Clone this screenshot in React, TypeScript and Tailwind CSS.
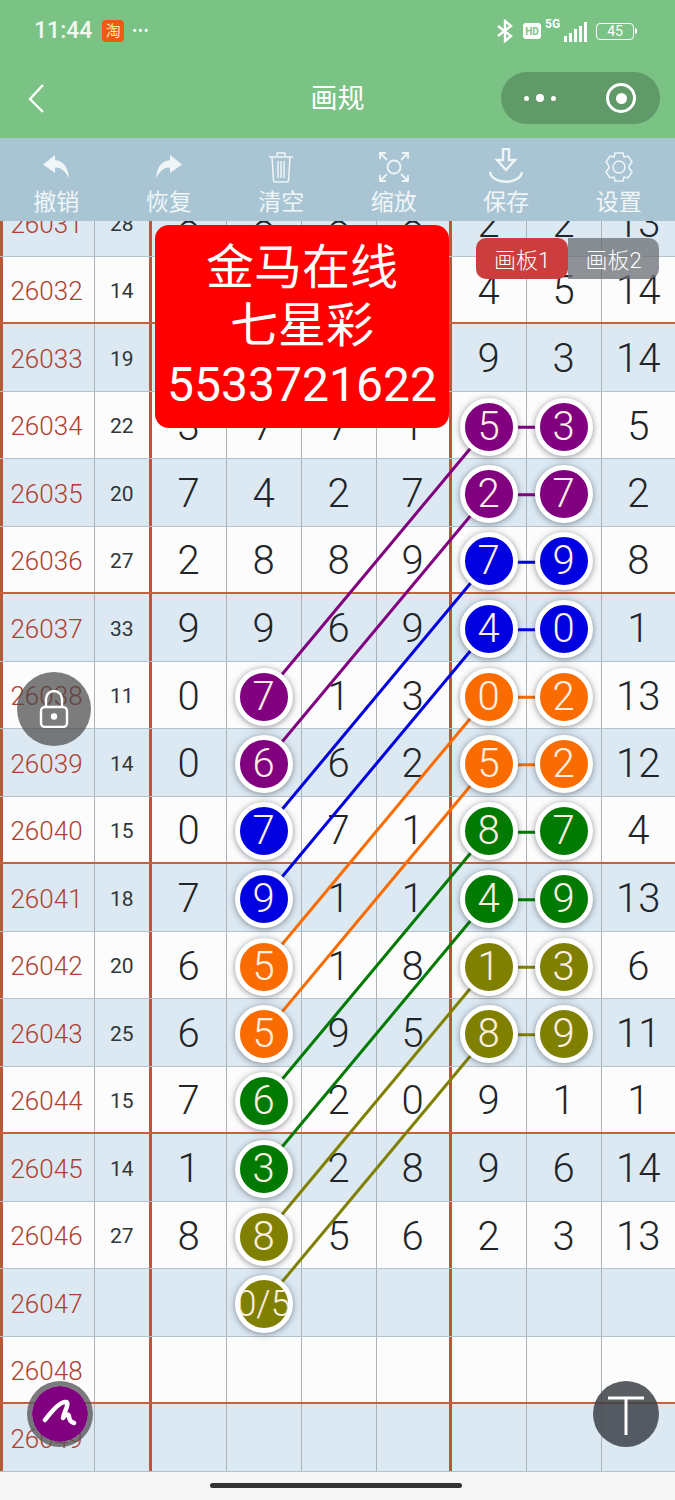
import React from "react";

const P = "#800080", B = "#0000e0", O = "#fa6c00", G = "#007a00", L = "#808000";
type C = { v: string; c?: string };
const n = (v: string | number, c?: string): C => ({ v: String(v), c });
const rows: { id: number; sum: string; cells: C[] }[] = [
  { id: 26031, sum: "28", cells: [n(8), n(8), n(8), n(8), n(2), n(2), n(13)] },
  { id: 26032, sum: "14", cells: [n(""), n(""), n(""), n(""), n(4), n(5), n(14)] },
  { id: 26033, sum: "19", cells: [n(""), n(""), n(""), n(""), n(9), n(3), n(14)] },
  { id: 26034, sum: "22", cells: [n(3), n(7), n(7), n(1), n(5, P), n(3, P), n(5)] },
  { id: 26035, sum: "20", cells: [n(7), n(4), n(2), n(7), n(2, P), n(7, P), n(2)] },
  { id: 26036, sum: "27", cells: [n(2), n(8), n(8), n(9), n(7, B), n(9, B), n(8)] },
  { id: 26037, sum: "33", cells: [n(9), n(9), n(6), n(9), n(4, B), n(0, B), n(1)] },
  { id: 26038, sum: "11", cells: [n(0), n(7, P), n(1), n(3), n(0, O), n(2, O), n(13)] },
  { id: 26039, sum: "14", cells: [n(0), n(6, P), n(6), n(2), n(5, O), n(2, O), n(12)] },
  { id: 26040, sum: "15", cells: [n(0), n(7, B), n(7), n(1), n(8, G), n(7, G), n(4)] },
  { id: 26041, sum: "18", cells: [n(7), n(9, B), n(1), n(1), n(4, G), n(9, G), n(13)] },
  { id: 26042, sum: "20", cells: [n(6), n(5, O), n(1), n(8), n(1, L), n(3, L), n(6)] },
  { id: 26043, sum: "25", cells: [n(6), n(5, O), n(9), n(5), n(8, L), n(9, L), n(11)] },
  { id: 26044, sum: "15", cells: [n(7), n(6, G), n(2), n(0), n(9), n(1), n(1)] },
  { id: 26045, sum: "14", cells: [n(1), n(3, G), n(2), n(8), n(9), n(6), n(14)] },
  { id: 26046, sum: "27", cells: [n(8), n(8, L), n(5), n(6), n(2), n(3), n(13)] },
  { id: 26047, sum: "", cells: [n(""), n("0/5", L), n(""), n(""), n(""), n(""), n("")] },
  { id: 26048, sum: "", cells: [n(""), n(""), n(""), n(""), n(""), n(""), n("")] },
  { id: 26049, sum: "", cells: [n(""), n(""), n(""), n(""), n(""), n(""), n("")] },
];

const y = (i: number) => 35.75 + 67.5 * i;
const diagonals = [
  [7, 3, P], [8, 4, P], [9, 5, B], [10, 6, B], [11, 7, O], [12, 8, O], [13, 9, G], [14, 10, G], [15, 11, L], [16, 12, L],
] as [number, number, string][];

function Ball({ v, c }: { v: string; c: string }) {
  return (
    <div
      className={`relative z-10 flex h-[58px] w-[58px] shrink-0 items-center justify-center overflow-hidden rounded-full border-[5px] border-white leading-none font-light text-[#fdf0e2] shadow-[0_1px_6px_rgba(40,50,60,0.55)] ${
        v.length > 1 ? "text-[36px]" : "text-[40px]"
      }`}
      style={{ backgroundColor: c }}
    >
      {v}
    </div>
  );
}

function Row({ r }: { r: (typeof rows)[number] }) {
  const odd = r.id % 2 === 1;
  const heavy = (r.id - 26032) % 4 === 0 && r.id >= 26032;
  return (
    <div
      className={`relative grid h-[67.5px] grid-cols-[95px_56.5px_75px_75px_75px_75px_75px_75px_73.5px] border-b ${
        heavy ? "border-b-[2px] border-b-[#c9603c]" : "border-b-[#b4c2cc]"
      } ${odd ? "bg-[#dce9f3]" : "bg-[#fcfcfc]"}`}
    >
      <div className="flex items-center justify-center border-r border-r-[#a9b3ba] border-l-[3px] border-l-[#b9573a] pr-[4px] pt-[4px] text-[26px] font-light text-[#b03f30]">
        {r.id}
      </div>
      <div className="flex items-center justify-center border-r-[3px] border-[#b9573a] pt-[4px] text-[21px] text-[#30363a]">{r.sum}</div>
      {r.cells.map((c, j) => (
        <div
          key={j}
          className={`relative flex items-center justify-center pt-[4px] text-[40px] font-light text-[#1f2529] ${
            j === 3 ? "border-r-[3px] border-[#b9573a]" : j < 6 ? "border-r border-[#a9b3ba]" : ""
          }`}
        >
          {c.c ? <Ball v={c.v} c={c.c} /> : c.v}
        </div>
      ))}
    </div>
  );
}

function Tool({ label, children }: { label: string; children: React.ReactNode }) {
  return (
    <div className="flex w-[112.5px] flex-col items-center">
      <div className="flex h-[37px] items-center justify-center">{children}</div>
      <div className="mt-[3px] text-[23px] leading-[30px] text-[#f0f5f7]">{label}</div>
    </div>
  );
}

export default function App() {
  return (
    <div className="relative h-[1500px] w-[675px] overflow-hidden bg-[#f6f6f6] font-['Roboto','Noto_Sans_CJK_SC',sans-serif]">
      <div className="h-[138px] bg-[#7bc285] text-white">
        <div className="flex h-[62px] items-center justify-between pl-[34px] pr-[38px]">
          <div className="flex items-center">
            <span className="text-[23px] font-medium text-[#f2f7f0]">11:44</span>
            <span className="ml-[10px] flex h-[22px] w-[22px] items-center justify-center rounded-[4px] bg-[#ee5a12] text-[15px] text-[#ffe9b0]">淘</span>
            <span className="ml-[8px] text-[14px] tracking-[1px]">•••</span>
          </div>
          <div className="flex items-center">
            <svg width="16" height="24" viewBox="0 0 16 24" fill="none" stroke="white" strokeWidth="2.4">
              <path d="M1 7l13 10-6 5V2l6 5L1 17" />
            </svg>
            <span className="ml-[10px] flex h-[16px] w-[18px] items-center justify-center rounded-[3px] bg-white text-[10px] font-bold text-[#7bc285]">HD</span>
            <div className="relative ml-[4px] h-[24px] w-[42px]">
              <span className="absolute left-0 top-[-1px] text-[12px] font-bold leading-[13px]">5G</span>
              <div className="absolute bottom-[1px] right-0 flex items-end gap-[2px]">
                <i className="h-[6px] w-[3px] bg-white" />
                <i className="h-[9px] w-[3px] bg-white" />
                <i className="h-[13px] w-[3px] bg-white" />
                <i className="h-[16px] w-[3px] bg-white" />
                <i className="h-[20px] w-[3px] bg-white" />
              </div>
            </div>
            <div className="ml-[9px] flex h-[17px] w-[38px] items-center justify-center rounded-[4px] border border-white text-[14px] leading-none">45</div>
            <i className="ml-[1px] h-[6px] w-[2px] rounded-r bg-white" />
          </div>
        </div>
        <div className="relative flex h-[76px] items-center justify-center">
          <svg className="absolute left-[26px] top-[20px]" width="20" height="32" viewBox="0 0 20 32" fill="none" stroke="white" strokeWidth="2.4">
            <path d="M17 3L4 17l13 13" />
          </svg>
          <span className="mb-[2px] text-[27px] text-white">画规</span>
          <div className="absolute right-[15px] top-[10px] flex h-[52px] w-[159px] items-center rounded-full bg-[#5f9a68]">
            <div className="ml-[23px] flex w-[32px] items-center justify-between">
              <i className="h-[5px] w-[5px] rounded-full bg-white" />
              <i className="h-[8px] w-[8px] rounded-full bg-white" />
              <i className="h-[5px] w-[5px] rounded-full bg-white" />
            </div>
            <div className="ml-[50px] flex h-[30px] w-[30px] items-center justify-center rounded-full border-[3px] border-white">
              <i className="h-[11px] w-[11px] rounded-full bg-white" />
            </div>
          </div>
        </div>
      </div>

      <div className="relative z-20 flex h-[83px] bg-[#a9c5d4] pt-[10px]">
        <Tool label="撤销">
          <svg width="30" height="26" viewBox="0 0 30 26" fill="#f0f5f7"><path d="M14 1L2 10.500l12 8.500v-5.500c6 0 10 3 14 11-1-11-5-17.500-14-18.500z" /></svg>
        </Tool>
        <Tool label="恢复">
          <svg width="30" height="26" viewBox="0 0 30 26" fill="#f0f5f7"><path d="M16 1l12 9.500-12 8.500v-5.500c-6 0-10 3-14 11 1-11 5-17.500 14-18.500z" /></svg>
        </Tool>
        <Tool label="清空">
          <svg width="26" height="32" viewBox="0 0 26 32" fill="none" stroke="#f0f5f7" strokeWidth="1.5"><path d="M1 6h24M9 5V2h8v3M4 6l1.500 23a2 2 0 002 2h11a2 2 0 002-2L22 6M10 10v17M13 10v17M16 10v17" /></svg>
        </Tool>
        <Tool label="缩放">
          <svg width="30" height="30" viewBox="0 0 30 30" fill="none" stroke="#f0f5f7" strokeWidth="1.800"><path d="M1 7V1h6M23 1h6v6M1 23v6h6M23 29h6v-6M2 2l6 6M28 2l-6 6M2 28l6-6M28 28l-6-6" /><circle cx="15" cy="15" r="6.500" /></svg>
        </Tool>
        <Tool label="保存">
          <svg className="mt-[-2px]" width="36" height="36" viewBox="0 0 36 36" fill="none" stroke="#f0f5f7" strokeWidth="2.400"><path d="M15 1h6v11h6l-9 10-9-10h6zM2 24c2 13 30 13 32 0" /></svg>
        </Tool>
        <Tool label="设置">
          <svg width="30" height="32" viewBox="0 0 30 32" fill="none" stroke="#f0f5f7" strokeWidth="1.500"><path d="M11 2h8l1 4 4-1 4 6-3 4v2l3 4-4 6-4-1-1 4h-8l-1-4-4 1-4-6 3-4v-2L2 11l4-6 4 1z" /><circle cx="15" cy="16" r="6" /></svg>
        </Tool>
      </div>

      <div className="relative h-[1251px] overflow-hidden">
        <div className="relative mt-[-32px]">
          <svg className="pointer-events-none absolute left-0 top-0 z-[5]" width="675" height="1320">
            {diagonals.map(([a, b, c], i) => (
              <line key={i} x1={263} y1={y(a)} x2={488} y2={y(b)} stroke={c} strokeWidth="3" />
            ))}
            {[3, 4, 5, 6, 7, 8, 9, 10, 11, 12].map((i) => (
              <line key={i} x1={488} y1={y(i)} x2={563} y2={y(i)} stroke={rows[i].cells[4].c} strokeWidth="3" />
            ))}
          </svg>
          {rows.map((r) => (
            <Row key={r.id} r={r} />
          ))}
        </div>

        <div className="absolute left-[155px] top-[4px] z-20 flex h-[203px] w-[294px] flex-col items-center justify-center rounded-[14px] bg-[#ff0000] text-[48px] leading-[58.5px] text-white">
          <div>金马在线</div>
          <div>七星彩</div>
          <div>5533721622</div>
        </div>

        <div className="absolute left-[476px] top-[17px] z-20 flex h-[41px] pt-0 text-[22px] font-light text-white">
          <div className="flex w-[92px] items-center justify-center rounded-[10px] bg-[#cc3d3d] pt-[4px]">画板1</div>
          <div className="flex w-[91px] items-center justify-center rounded-r-[10px] bg-[rgba(105,110,115,0.75)] pt-[4px]">画板2</div>
        </div>
      </div>

      <div className="absolute left-[17px] top-[672px] z-30 flex h-[74px] w-[74px] items-center justify-center rounded-full bg-[rgba(70,70,70,0.7)]">
        <svg width="30" height="38" viewBox="0 0 30 38" fill="none" stroke="white" strokeWidth="2.400">
          <rect x="2" y="17" width="26" height="20" rx="4" />
          <path d="M7 17V9a8 8 0 0116 0v8" />
          <circle cx="15" cy="26.500" r="2" fill="white" />
        </svg>
      </div>

      <div className="absolute left-[27px] top-[1381px] z-30 flex h-[66px] w-[66px] items-center justify-center rounded-full border-[5px] border-[rgba(90,90,90,0.8)] bg-[#800080] bg-clip-padding">
        <svg width="36" height="36" viewBox="0 0 36 36" fill="none" stroke="white" strokeWidth="4.500" strokeLinecap="round" strokeLinejoin="round">
          <path d="M3 24C9 16 18 5 24 6c4 1-2 10-3 16 2-3 5-5 6-2 0 4 2 6 5 7" />
        </svg>
      </div>

      <div className="absolute left-[593px] top-[1381px] z-30 flex h-[66px] w-[66px] items-center justify-center rounded-full bg-[rgba(60,65,70,0.85)]">
        <svg width="36" height="42" viewBox="0 0 36 42" fill="none" stroke="white" strokeWidth="3">
          <path d="M0 5h36M18 5v37" />
        </svg>
      </div>

      <div className="absolute left-[210px] top-[1483px] h-[5px] w-[252px] rounded-full bg-[#333333]" />
    </div>
  );
}
